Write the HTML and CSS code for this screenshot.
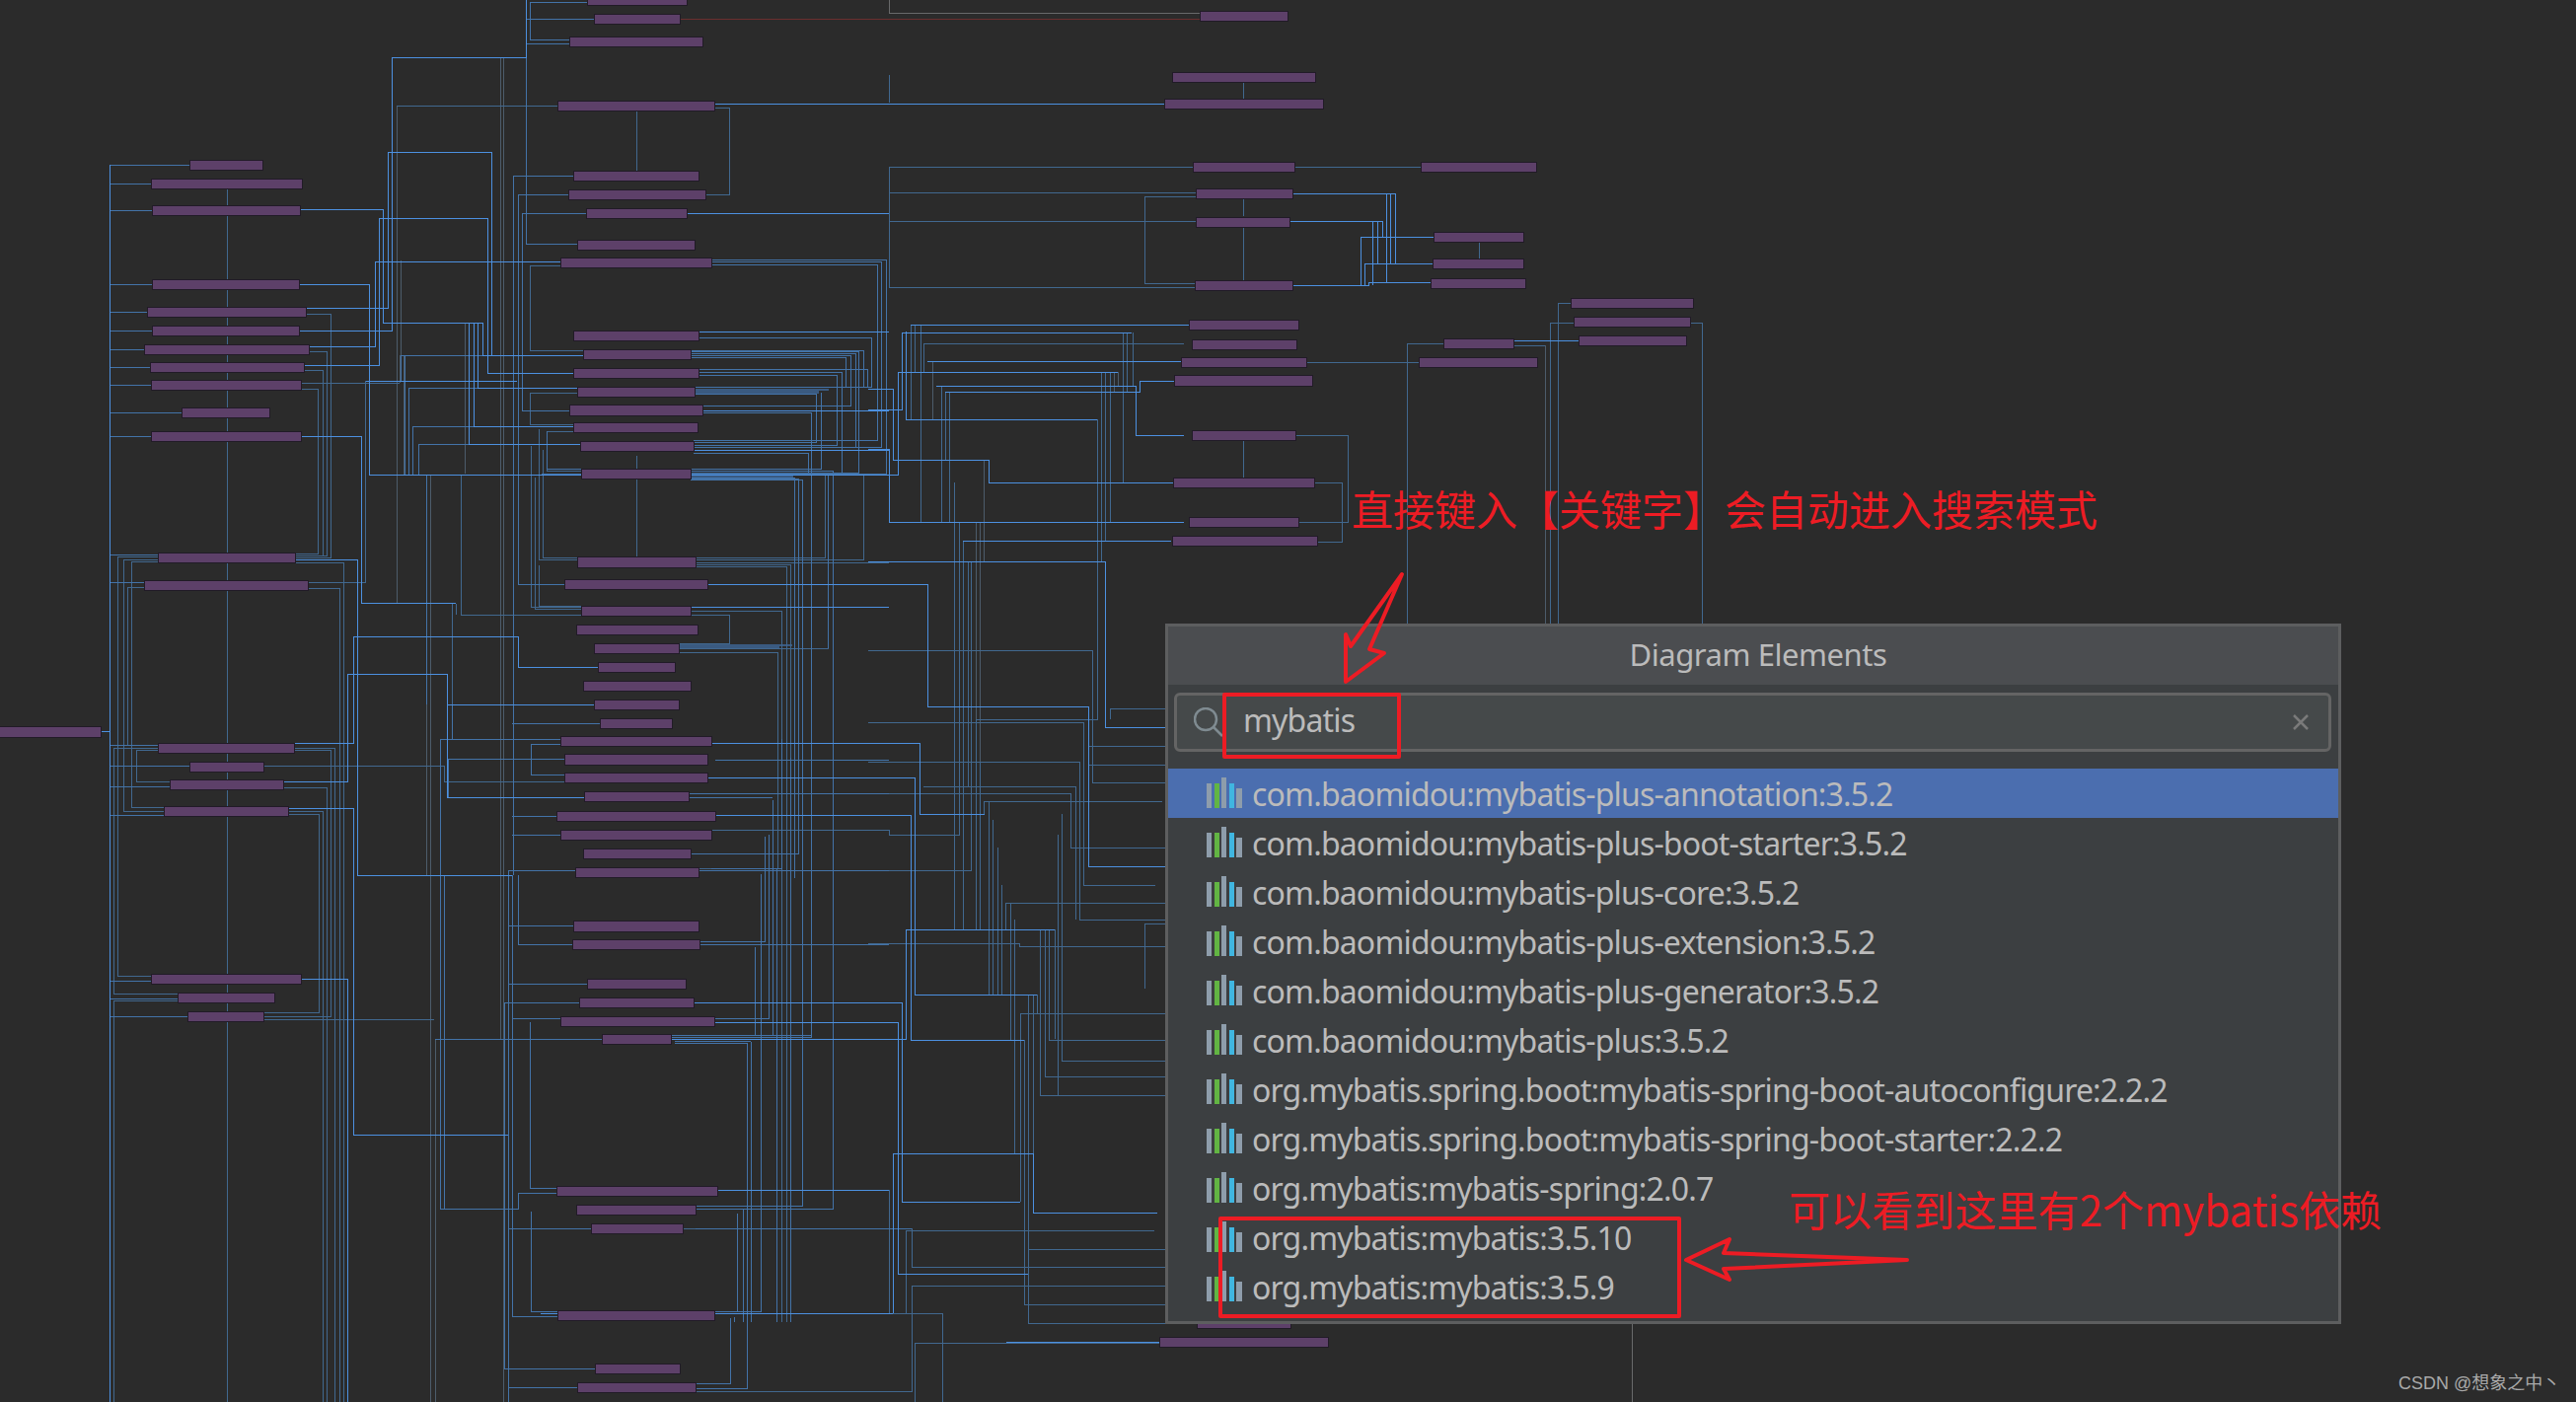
FILE: index.html
```html
<!DOCTYPE html>
<html lang="zh">
<head>
<meta charset="utf-8">
<title>Diagram Elements</title>
<link rel="stylesheet" href="styles.css">
</head>
<body>
<main class="canvas">
  <svg class="diagram" width="2611" height="1421" viewBox="0 0 2611 1421" aria-hidden="true">
    <defs>
      <symbol id="maven" viewBox="0 0 36 31">
        <rect class="bar-gray" x="0" y="6" width="5" height="25"/>
        <rect class="bar-green" x="8" y="6" width="5" height="25"/>
        <rect class="bar-gray" x="15" y="0" width="5" height="31"/>
        <rect class="bar-blue" x="23" y="6" width="5" height="25"/>
        <rect class="bar-gray" x="30" y="11" width="6" height="20"/>
      </symbol>
    </defs>
    <path class="band" d="M704 394H840V396H830V399H704ZM700 479H820V481H804V484H700ZM688 653H803V655H790V658H688Z"/>
    <path class="red-edge" d="M689 19H1216"/>
    <path class="gray-edge" d="M901 0V13H1216M1654 1340V1421"/>
    <path class="faint" d="M507 58V1053M510 58V1421M402 107V611H366M406 264V360M471 327V480M475 327V450M441 1053V1421M436 481V1421M432 481V887M409 360V481M405 360V388M1566 350V632M945 366V425M1133 377V391M1129 377V397M1125 377V529M997 466V569M989 529V942M993 529V942"/>
    <path class="dim" d="M230 191V1421M645 109V178M645 462V565M1260 82V100M1260 202V219M1260 230V285M1260 446V484M1499 244V262M306 388H405M312 590H370V386M310 318H335V565H299M313 356H331V563H299M308 375H327V563H299M305 394H322V561H299M299 570H348V1421M312 596H344V1421M160 564H119V989H153M160 567H125V822H166M160 569H133V818H166M146 595H129V755H160M160 758H115V1007H180M160 760H138V792H172M180 1014H115V1421M298 758H339V1421M298 760H335V1030H267M287 798H331V1421M292 822H327V1421M292 825H323V1026H267M267 776H450V792H572M267 1033H440M402 107H565M537 269V355H591M537 269H568M724 109H739V197H715M537 398V430H581M585 398H537M546 435V567H875V480M550 456V565H836V480M554 437V477H589M554 437H581M538 452V615H589M542 484V617H589M546 573V614H589M705 570H901M705 572H801V1340M705 574H797V1340M739 623V652H688M700 623H739M700 619H792V1340M688 661H788V880H708M688 657H839V480M467 481V623H589M458 612V714M462 612V623M1160 199V287H1211M1160 199H1212M901 76V104M901 169V291M901 169H1209M1312 169H1440M901 195H1212M901 224H1212M901 291H1211M1313 441H1366V529H1316M1332 489H1360V549H1335M1324 367H1438M1426 348H1463M1426 348V632M1534 350H1566M1571 327H1595M1571 327V632M1579 307H1592M1579 307V632M1713 327H1725V632M923 329V425M927 329V377M933 329V529M1142 337V397M1148 337V391M1138 337V489M936 348H1200M936 348V377M1116 377V569M1120 377V548M1125 377V529M954 391V529M962 397V529M958 397V466M967 489V942M972 529V846H901V841H721M976 548V942M981 569V797H936M984 569V882H880M1112 425V729H989V942M1125 729V718H1181M880 732H989M989 732H1098V897H1171M880 659H1107V793H1181M1090 797H981M1090 797V932M993 772V942M880 772H1094V932H1181M880 804H1085V859H1181M997 812H1178M997 812V825M1002 812V1008M1006 831V1008M1011 859V1008M1015 897V1008M1019 915H1181M1019 915V942M1024 915V1054M1028 932V1169M1054 942V1110H1181M1059 942V1091H1181M1063 942V1054H1181M1069 942V1053M1076 825V1075H1181M1072 846V1110M1103 756H1181M1103 775H1181M1160 936H1181M1160 936V1002M880 956H1033V959H1181M1042 1008V1341H1181M1047 1008V1229M1051 1008V1027M1034 1027H1181M1034 1027V1218M1038 1054V1322H1181M1042 1266H1181M924 1245V1284H1181M692 1245H924M924 1303H1181M924 1303V1410H705M725 1331H955V1421M901 1206V1331M918 1247V1331M918 1247H1170M927 1361H1176M927 1361V1421"/>
    <path class="medium" d="M581 178H520V887M576 197H525V592H572M594 216H529V416H577M533 58V247H585M595 2H537V40H577M533 19H602M533 44H577M721 263H898V480H700M721 265H893V453H703M721 268H889V446H703M708 342H883V392H704M700 355H875V393M700 356H870V479H700M700 358H867V453M700 360H862V411H712M700 362H857V392H704M708 374H879V392M708 377H853V479M708 380H848V451H703M712 418H822V1051H680M703 448H827V399H704M703 459H819V480H700M700 475H832V398M700 477H844V1225H705M700 484H805V890M700 485H809V865H700M700 486H813V1222H705M839 657V480M585 393H414V481M581 432H418V481M588 450H424V481M591 360H406V387M591 360H410V481M589 475H554V437M549 480H589V475M757 1057V1407H705M765 960V1049H680M775 848V954H709M779 846V1032H724M783 811V1049H680M787 880V1340M792 749V880H721M801 768V1340M761 1056V1340M753 1226V1340M747 1230V1329H724M744 1335V1340M740 1336V1402H705M538 1228V1329H565M519 887V1334H565M525 887V957H580M515 882V1421M511 1016H587M511 1016V1387H603M515 938H581M515 997H595M515 1406H585M519 1032H568M519 733H608M519 827H564M519 846H568M515 882H583M537 1036V1204H564M441 1053H610M525 1209H564M525 1209V1225H446V749H568M450 887V1225M454 769H572M454 769V808H592M538 754V785H572M538 754H568M458 714V749M432 481V714M679 1049H822M684 1055H761M684 1057H757M725 770H901M700 865H809M696 804H901M698 808H783M708 882H901M709 957H901M703 1016H901M705 1245H924M599 1245H515M771 886V1329H724M111 167H192M111 186H153M111 213H154M111 288H154M111 316H149M111 335H154M111 354H146M111 372H152M111 390H153M111 418H184M111 442H153M111 562H160M111 590H146M111 755H160M111 776H192M111 797H172M111 826H166M111 994H153M111 1012H180M111 1030H190"/>
    <path class="bright" d="M111 167V1421M102 741H111M303 335H397V58H533V0M304 212H388V327H489V360H591M310 312H393V154H498V360M303 288H374V481H589M313 351H380V265H568M308 370H384V221H494V378H581M371 386H524M480 327V432H581M484 327V393H585M475 327V450H588M724 105H1180M696 216H901M708 336H901M712 416H901M703 456H901M700 481H901M717 592H901M700 615H901M305 442H366V611H462M299 567H362V887H519M298 753H358V645H525V676H606M287 792H352V683H453V714H602M453 714V808H592M305 992H352V1421M292 819H358V1150H515M721 753H932V825H998M717 788H927V1008H1051M725 826H923V1054H1038M679 1053H918V942H1069M724 1036H910V1291H1042M702 1016H914V1218H1034M905 1169H1047V1229H1173M905 1169V1331M723 1206H901M548 1331H905M914 337H1147M914 337V415H880M918 336V425H1112M910 377H1133M910 377V481H880M905 394V466H1002V489H1189M905 394H880M901 455V529H1200M901 455H880M880 592H940V716H1103V878H1181M940 366H1198M949 391H1151V441H1200M958 397H1155V386H1190M880 569H1120V737H1181M976 548H1187M923 329H1205M1310 196H1414V267M1405 196V286M1409 196V267H1453M1308 224H1401V240M1391 224V289M1396 224V267M1310 289H1387V286H1450M1379 289V240H1453M1383 289V267H1453M1534 345H1600M1175 1360H1020"/>
    <g class="nodes">
      <rect x="192" y="162" width="74" height="10"/><rect x="153" y="181" width="153" height="10"/><rect x="154" y="208" width="150" height="10"/><rect x="154" y="283" width="149" height="10"/><rect x="149" y="311" width="161" height="10"/><rect x="154" y="330" width="149" height="10"/><rect x="146" y="349" width="167" height="10"/><rect x="152" y="367" width="156" height="10"/><rect x="153" y="385" width="152" height="10"/><rect x="184" y="413" width="89" height="10"/><rect x="153" y="437" width="152" height="10"/><rect x="160" y="560" width="139" height="10"/><rect x="146" y="588" width="166" height="10"/>
      <rect x="-2" y="736" width="104" height="11"/><rect x="160" y="753" width="138" height="10"/><rect x="192" y="772" width="75" height="10"/><rect x="172" y="790" width="115" height="10"/><rect x="166" y="817" width="126" height="10"/><rect x="153" y="987" width="152" height="10"/><rect x="180" y="1006" width="98" height="10"/><rect x="190" y="1025" width="77" height="10"/>
      <rect x="595" y="-5" width="101" height="10"/><rect x="602" y="14" width="87" height="10"/><rect x="577" y="37" width="135" height="10"/><rect x="565" y="102" width="159" height="10"/><rect x="581" y="173" width="127" height="10"/><rect x="576" y="192" width="139" height="10"/><rect x="594" y="211" width="102" height="10"/><rect x="585" y="243" width="119" height="10"/><rect x="568" y="261" width="153" height="10"/><rect x="581" y="335" width="127" height="10"/><rect x="591" y="354" width="109" height="10"/><rect x="581" y="373" width="127" height="10"/><rect x="585" y="392" width="119" height="10"/><rect x="577" y="410" width="135" height="11"/><rect x="581" y="428" width="126" height="10"/><rect x="588" y="447" width="115" height="10"/><rect x="589" y="475" width="111" height="10"/><rect x="585" y="564" width="120" height="11"/><rect x="572" y="587" width="145" height="10"/><rect x="589" y="614" width="111" height="10"/><rect x="584" y="633" width="123" height="10"/><rect x="602" y="652" width="86" height="10"/><rect x="606" y="671" width="78" height="10"/><rect x="591" y="690" width="109" height="10"/><rect x="602" y="709" width="86" height="10"/><rect x="608" y="728" width="73" height="10"/><rect x="568" y="746" width="153" height="10"/><rect x="572" y="764" width="145" height="11"/><rect x="572" y="783" width="145" height="10"/><rect x="592" y="802" width="106" height="10"/><rect x="564" y="822" width="161" height="10"/><rect x="568" y="841" width="153" height="10"/><rect x="591" y="860" width="109" height="10"/><rect x="583" y="879" width="125" height="10"/><rect x="581" y="933" width="127" height="11"/><rect x="580" y="952" width="129" height="10"/><rect x="595" y="992" width="100" height="10"/><rect x="587" y="1011" width="116" height="10"/><rect x="568" y="1030" width="156" height="10"/><rect x="610" y="1048" width="70" height="10"/><rect x="564" y="1202" width="163" height="10"/><rect x="584" y="1221" width="121" height="10"/><rect x="599" y="1240" width="93" height="10"/><rect x="565" y="1328" width="159" height="10"/><rect x="603" y="1382" width="86" height="10"/><rect x="585" y="1401" width="120" height="10"/>
      <rect x="1216" y="11" width="89" height="10"/><rect x="1188" y="73" width="145" height="10"/><rect x="1180" y="100" width="161" height="10"/><rect x="1209" y="164" width="103" height="10"/><rect x="1212" y="191" width="98" height="10"/><rect x="1212" y="220" width="95" height="10"/><rect x="1211" y="284" width="99" height="10"/><rect x="1205" y="324" width="111" height="10"/><rect x="1208" y="344" width="106" height="10"/><rect x="1197" y="362" width="127" height="10"/><rect x="1190" y="380" width="140" height="11"/><rect x="1208" y="436" width="105" height="10"/><rect x="1189" y="484" width="143" height="10"/><rect x="1205" y="524" width="111" height="10"/><rect x="1188" y="543" width="147" height="10"/>
      <rect x="1440" y="164" width="117" height="10"/><rect x="1453" y="235" width="91" height="10"/><rect x="1452" y="262" width="92" height="10"/><rect x="1450" y="282" width="96" height="10"/><rect x="1592" y="302" width="124" height="10"/><rect x="1595" y="321" width="118" height="10"/><rect x="1600" y="340" width="109" height="10"/><rect x="1463" y="343" width="71" height="10"/><rect x="1438" y="362" width="120" height="10"/>
      <rect x="1213" y="1336" width="95" height="10"/><rect x="1175" y="1355" width="171" height="10"/>
    </g>
  </svg>

  <section class="dialog">
    <h1 class="dialog-title">Diagram Elements</h1>
    <div class="search-field">
      <svg class="search-icon" width="30" height="30" viewBox="0 0 30 30" aria-hidden="true"><circle cx="12" cy="12" r="11"/><path d="M20 20L29 29"/></svg>
      <span class="search-text">mybatis</span>
      <svg class="clear-icon" width="20" height="20" viewBox="0 0 20 20" aria-hidden="true"><path d="M3 3L17 17M17 3L3 17"/></svg>
    </div>
    <ul class="results">
      <li class="row selected"><svg class="row-icon" width="36" height="31"><use href="#maven"/></svg>com.baomidou:mybatis-plus-annotation:3.5.2</li>
      <li class="row"><svg class="row-icon" width="36" height="31"><use href="#maven"/></svg>com.baomidou:mybatis-plus-boot-starter:3.5.2</li>
      <li class="row"><svg class="row-icon" width="36" height="31"><use href="#maven"/></svg>com.baomidou:mybatis-plus-core:3.5.2</li>
      <li class="row"><svg class="row-icon" width="36" height="31"><use href="#maven"/></svg>com.baomidou:mybatis-plus-extension:3.5.2</li>
      <li class="row"><svg class="row-icon" width="36" height="31"><use href="#maven"/></svg>com.baomidou:mybatis-plus-generator:3.5.2</li>
      <li class="row"><svg class="row-icon" width="36" height="31"><use href="#maven"/></svg>com.baomidou:mybatis-plus:3.5.2</li>
      <li class="row"><svg class="row-icon" width="36" height="31"><use href="#maven"/></svg>org.mybatis.spring.boot:mybatis-spring-boot-autoconfigure:2.2.2</li>
      <li class="row"><svg class="row-icon" width="36" height="31"><use href="#maven"/></svg>org.mybatis.spring.boot:mybatis-spring-boot-starter:2.2.2</li>
      <li class="row"><svg class="row-icon" width="36" height="31"><use href="#maven"/></svg>org.mybatis:mybatis-spring:2.0.7</li>
      <li class="row"><svg class="row-icon" width="36" height="31"><use href="#maven"/></svg>org.mybatis:mybatis:3.5.10</li>
      <li class="row"><svg class="row-icon" width="36" height="31"><use href="#maven"/></svg>org.mybatis:mybatis:3.5.9</li>
    </ul>
  </section>

  <svg class="markup" width="2611" height="1421" viewBox="0 0 2611 1421" aria-hidden="true">
    <rect x="1241" y="704" width="177" height="63"/>
    <rect x="1237" y="1235" width="465" height="99"/>
    <path d="M1421 582L1369 655L1364 643V691L1403 662L1388 658Z"/>
    <path d="M1709 1277L1753 1256L1747 1270L1933 1277L1747 1286L1753 1297Z"/>
  </svg>
  <p class="note note-top">直接键入【关键字】会自动进入搜索模式</p>
  <p class="note note-side">可以看到这里有2个mybatis依赖</p>
  <p class="watermark">CSDN @想象之中丶</p>
</main>
</body>
</html>
```

FILE: styles.css
```css
* { box-sizing: border-box; }
html, body { margin: 0; padding: 0; }
body { background: #2b2b2b; overflow: hidden; }

.canvas {
  position: relative;
  width: 2611px;
  height: 1421px;
  overflow: hidden;
  background: #2b2b2b;
  font-family: "Noto Sans", "Noto Sans CJK SC", sans-serif;
}

.diagram, .markup { position: absolute; left: 0; top: 0; display: block; }

.diagram path { fill: none; stroke-width: 1; shape-rendering: crispEdges; }
.diagram .band { fill: #3a5a80; stroke: none; }
.diagram .red-edge { stroke: #6b2f2f; }
.diagram .gray-edge { stroke: #68696a; }
.diagram .faint { stroke: #4c5c6b; }
.diagram .dim { stroke: #41688f; }
.diagram .medium { stroke: #4373a8; }
.diagram .bright { stroke: #4c90e0; }

.nodes rect { fill: #5d4069; stroke: #211b27; stroke-width: 1; shape-rendering: crispEdges; }

.bar-gray { fill: #8e9dab; }
.bar-green { fill: #62b543; }
.bar-blue { fill: #40b6e0; }

.dialog {
  position: absolute;
  left: 1181px;
  top: 632px;
  width: 1192px;
  height: 710px;
  display: flex;
  flex-direction: column;
  background: #3c3f41;
  border: 3px solid #5d5e5f;
}

.dialog-title {
  margin: 0;
  height: 59px;
  padding-left: 10px;
  display: flex;
  align-items: center;
  justify-content: center;
  background: #4b4d50;
  color: #bbbbbb;
  font-size: 31px;
  font-weight: 400;
  letter-spacing: -.45px;
  line-height: 55px;
  padding-bottom: 2px;
}

.search-field {
  margin: 8px 7px 0 6px;
  height: 60px;
  display: flex;
  align-items: center;
  padding: 0 12px 0 17px;
  background: #45494a;
  border: 3px solid #646464;
  border-radius: 6px;
  color: #bbbbbb;
  font-size: 32px;
  letter-spacing: -.83px;
}

.search-icon { flex: none; }
.search-icon circle, .search-icon path { fill: none; stroke: #7f8b91; stroke-width: 2.5; }
.search-text { margin-left: 20px; flex: 1; padding-bottom: 5px; }
.clear-icon { flex: none; margin-right: 6px; }
.clear-icon path { fill: none; stroke: #7a7a7a; stroke-width: 2.5; }

.results { list-style: none; margin: 17px 0 0; padding: 0; }

.row {
  height: 50px;
  display: flex;
  align-items: center;
  gap: 10px;
  padding-left: 39px;
  color: #bbbbbb;
  font-size: 32px;
  letter-spacing: -.83px;
  white-space: nowrap;
}
.row.selected { background: #4b6eaf; }
.row-icon { flex: none; margin-top: -1px; }

.markup rect, .markup path {
  fill: none;
  stroke: #ed1c24;
  stroke-width: 4;
  stroke-linejoin: round;
}

.note {
  position: absolute;
  margin: 0;
  color: #ed1c24;
  font-family: "Noto Sans CJK SC", "Noto Sans", sans-serif;
  font-size: 42px;
  line-height: 50px;
  white-space: nowrap;
}
.note-top { left: 1370px; top: 490px; }
.note-side { left: 1813px; top: 1200px; letter-spacing: .1px; }

.watermark {
  position: absolute;
  left: 2431px;
  top: 1390px;
  margin: 0;
  color: #a9a9a9;
  font-family: "Liberation Sans", "Noto Sans CJK SC", sans-serif;
  font-size: 18px;
  line-height: 24px;
  white-space: nowrap;
}
```
